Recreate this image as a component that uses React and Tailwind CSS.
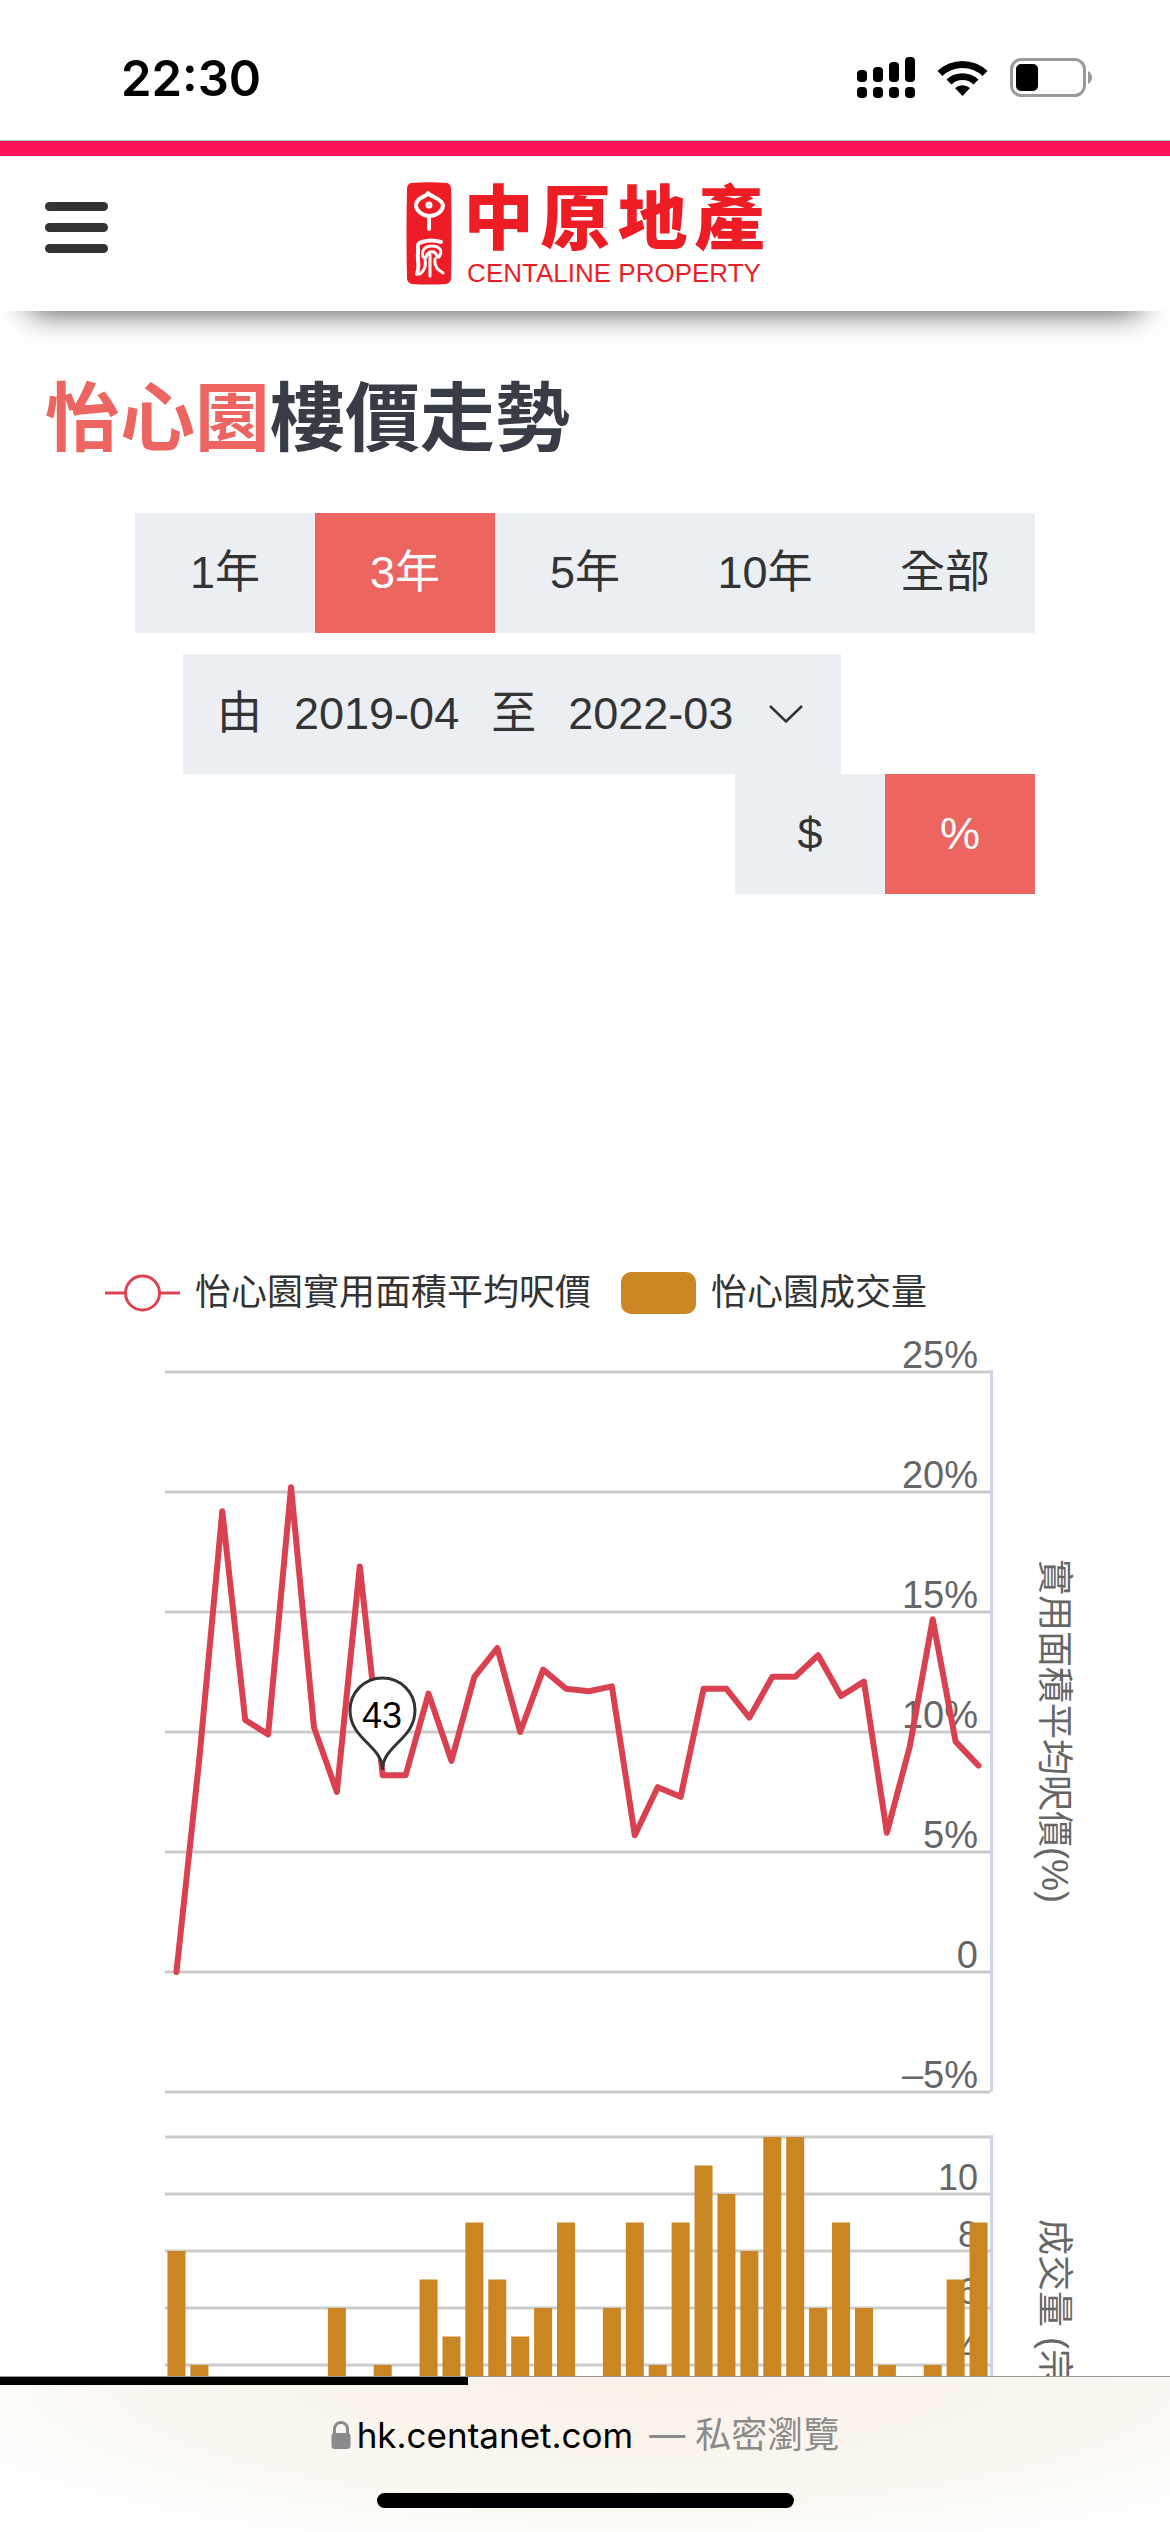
import { useState } from 'react'

const PERIODS = ['1年', '3年', '5年', '10年', '全部']
const UNITS = ['$', '%']

// price change per month, in percent
const PRICES = [
  0, 8.9, 19.2, 10.5, 9.9, 20.2, 10.2, 7.5, 16.9, 8.2, 8.2, 11.6, 8.8, 12.3, 13.5, 10, 12.6, 11.8, 11.7, 11.9, 5.7,
  7.7, 7.3, 11.8, 11.8, 10.6, 12.3, 12.3, 13.2, 11.5, 12.1, 5.8, 9.4, 14.7, 9.6, 8.6,
]
const VOLUMES = [
  8, 4, 2, 1, 3, 2, 1, 6, 3, 4, 2, 7, 5, 9, 7, 5, 6, 9, 3, 6, 9, 4, 9, 11, 10, 8, 12, 12, 6, 9, 6, 4, 2, 4, 7, 9,
]

const PLOT_LEFT = 165
const PLOT_RIGHT = 990
const STEP = (PLOT_RIGHT - PLOT_LEFT) / PRICES.length

const pointX = (i) => PLOT_LEFT + STEP * (i + 0.5)
const priceY = (v) => 642 - v * 24
const volumeY = (v) => 1149 - v * 28.5

const PRICE_TICKS = [
  [25, '25%'],
  [20, '20%'],
  [15, '15%'],
  [10, '10%'],
  [5, '5%'],
  [0, '0'],
  [-5, '–5%'],
]
const VOLUME_TICKS = [12, 10, 8, 6, 4]

function StatusBar() {
  return (
    <div className="flex h-[141px] shrink-0 items-center justify-between border-b border-[#b9c4bd] pt-4 pr-[78px] pl-[121px]">
      <span className="font-['Inter'] text-[49px] leading-none font-semibold text-black">22:30</span>
      <div className="flex items-center gap-[22px]">
        <svg className="h-[42px] w-[58px]" viewBox="0 0 58 42" aria-hidden="true">
          <rect x="0" y="13" width="10" height="12" rx="4" />
          <rect x="16" y="10" width="10" height="15" rx="4" />
          <rect x="32" y="5" width="10" height="20" rx="4" />
          <rect x="48" y="0" width="10" height="25" rx="4" />
          <rect x="0" y="30" width="10" height="11" rx="4" />
          <rect x="16" y="30" width="10" height="11" rx="4" />
          <rect x="32" y="30" width="10" height="11" rx="4" />
          <rect x="48" y="30" width="10" height="11" rx="4" />
        </svg>
        <svg className="h-[38px] w-[51px]" viewBox="0 0 51 38" aria-hidden="true">
          <path d="M0.5 12 A36 36 0 0 1 50.5 12 L45.5 17 A29 29 0 0 0 5.5 17 Z" />
          <path d="M9.5 20.5 A23.5 23.5 0 0 1 41.5 20.5 L36.5 25.5 A16 16 0 0 0 14.5 25.5 Z" />
          <path d="M18 29 A11.5 11.5 0 0 1 33 29 L25.5 37 Z" />
        </svg>
        <svg className="h-[40px] w-[82px]" viewBox="0 0 82 40" aria-hidden="true">
          <rect x="1.5" y="1.5" width="73" height="36" rx="10" fill="none" stroke="#9a9a9a" strokeWidth="3" />
          <rect x="6" y="6" width="22" height="27" rx="5" />
          <path d="M78 13 Q82 15.500 82 19.500 T78 26 Z" fill="#9a9a9a" />
        </svg>
      </div>
    </div>
  )
}

function Logo() {
  return (
    <a href="#home" aria-label="中原地產" className="flex items-center gap-3 text-[#ee1c25]">
      <svg className="h-[103px] w-[46px]" viewBox="0 0 46 103" aria-hidden="true">
        <path
          d="M5 1 Q23 -0.500 41 1 Q45 2 45 7 Q46 50 45 96 Q45 101 40 102 Q23 103 6 102 Q1 101 1 96 Q0 50 1 7 Q1 2 5 1 Z"
          fill="#ee1c25"
        />
        <g fill="none" stroke="#fff" strokeLinecap="round" strokeLinejoin="round">
          <path d="M22 11 C21 15 10 15 10 23 C10 29 17 34 23 34 C31 34 37 29 37 23 C36 16 24 15 22 11 Z" strokeWidth="4" />
          <circle cx="23" cy="23" r="2" strokeWidth="3" />
          <path d="M23 35 V47" strokeWidth="4" />
          <path d="M11 92 C14 84 11 77 12 70 C12 63 11 61 16 60 C22 58 28 58 35 60" strokeWidth="4" />
          <path
            d="M17 75 C15 67 20 64 26 64 C34 64 37 69 33 75 M20 75 C22 68 30 68 31 75 M24 73 V94 M19 77 C20 84 19 88 14 92 M29 77 C28 85 32 88 37 91"
            strokeWidth="3"
          />
        </g>
      </svg>
      <span className="flex flex-col items-center">
        <span className="flex gap-[7px] font-['Noto_Sans_CJK_TC',sans-serif] text-[70px] leading-[66px] font-black">
          <span>中</span>
          <span>原</span>
          <span>地</span>
          <span>產</span>
        </span>
        <span className="mt-3 font-['Liberation_Sans',sans-serif] text-[26px] leading-[28px] whitespace-nowrap">
          CENTALINE PROPERTY
        </span>
      </span>
    </a>
  )
}

function SiteHeader() {
  return (
    <header className="relative z-10 grid h-[170px] shrink-0 grid-cols-[1fr_auto_1fr] items-center border-t-[15px] border-[#ff1556] bg-white px-[45px] shadow-[0_30px_30px_-30px_rgba(0,0,0,0.75)]">
      <button type="button" aria-label="選單" className="flex w-[63px] flex-col gap-3 pb-3">
        <span className="h-[9px] rounded-full bg-[#333]" />
        <span className="h-[9px] rounded-full bg-[#333]" />
        <span className="h-[9px] rounded-full bg-[#333]" />
      </button>
      <Logo />
    </header>
  )
}

function SegmentedButtons({ options, selected, onSelect, buttonClass }) {
  return (
    <div className="flex">
      {options.map((option) => (
        <button
          key={option}
          type="button"
          aria-pressed={option === selected}
          onClick={() => onSelect(option)}
          className={`h-[120px] ${buttonClass} ${option === selected ? 'bg-[#ec6561] text-white' : 'bg-[#ebeff4] text-[#333]'}`}
        >
          {option}
        </button>
      ))}
    </div>
  )
}

function Legend() {
  return (
    <div className="flex items-center gap-[15px] pl-[105px] text-[36px] leading-[42px] text-[#333]">
      <svg className="h-[42px] w-[75px]" viewBox="0 0 75 42" aria-hidden="true">
        <path d="M0 21 H75" stroke="#dc4453" strokeWidth="3" />
        <circle cx="37.500" cy="21" r="17" fill="#fff" stroke="#dc4453" strokeWidth="3" />
      </svg>
      <span>怡心園實用面積平均呎價</span>
      <span className="ml-[15px] h-[42px] w-[75px] rounded-[10px] bg-[#c98622]" />
      <span>怡心園成交量</span>
    </div>
  )
}

function TrendChart() {
  return (
    <svg
      className="block w-full shrink-0 font-['Liberation_Sans','Noto_Sans_CJK_TC',sans-serif]"
      viewBox="0 0 1170 1180"
      role="img"
      aria-label="怡心園樓價走勢"
    >
      <g stroke="#ccc" strokeWidth="3">
        {PRICE_TICKS.map(([value]) => (
          <line key={value} x1={PLOT_LEFT} x2={PLOT_RIGHT} y1={priceY(value)} y2={priceY(value)} />
        ))}
        {VOLUME_TICKS.map((value) => (
          <line key={value} x1={PLOT_LEFT} x2={PLOT_RIGHT} y1={volumeY(value)} y2={volumeY(value)} />
        ))}
      </g>
      <path d="M991.500 40 V762 M991.500 805 V1149" stroke="#ccd6eb" strokeWidth="3" />

      <g fill="#666" textAnchor="end">
        {PRICE_TICKS.map(([value, label]) => (
          <text key={value} x="978" y={priceY(value) - 4} fontSize="38">
            {label}
          </text>
        ))}
        {VOLUME_TICKS.slice(1).map((value) => (
          <text key={value} x="978" y={volumeY(value) - 4} fontSize="36">
            {value}
          </text>
        ))}
      </g>
      <g fill="#666" fontSize="36">
        <text transform="translate(1042 229) rotate(90)">實用面積平均呎價(%)</text>
        <text transform="translate(1042 889) rotate(90)">成交量 (宗)</text>
      </g>

      <g fill="#c98622">
        {VOLUMES.map((value, i) => (
          <rect key={i} x={pointX(i) - 9} y={volumeY(value)} width="18" height={value * 28.5} />
        ))}
      </g>
      <polyline
        points={PRICES.map((value, i) => `${pointX(i)},${priceY(value)}`).join(' ')}
        fill="none"
        stroke="#da4150"
        strokeWidth="6"
        strokeLinejoin="round"
        strokeLinecap="round"
      />

      <path
        d="M382.500 440 C382.500 415 350 410 350 380 A32.500 32 0 0 1 415 380 C415 410 382.500 415 382.500 440 Z"
        fill="#fff"
        stroke="#333"
        strokeWidth="3"
      />
      <text x="382" y="398" fontSize="36" textAnchor="middle" fill="#000">
        43
      </text>
    </svg>
  )
}

function BrowserBar() {
  return (
    <footer className="flex h-[156px] shrink-0 flex-col items-center border-t border-[#979797] bg-[radial-gradient(ellipse_at_55%_0%,#faf1e8_0%,#faf6ef_50%,#fdfcfa_75%,#ffffff_100%)]">
      <div className="h-2 w-2/5 self-start bg-black" />
      <div className="flex items-center pt-[26px] text-[36px] leading-[48px]">
        <svg className="mr-1.5 h-[28px] w-[20px]" viewBox="0 0 20 28" aria-hidden="true">
          <path d="M3.500 13 V8 A6.500 6.500 0 0 1 16.500 8 V13" fill="none" stroke="#8a8a8e" strokeWidth="3" />
          <rect x="0.500" y="12" width="19" height="16" rx="3" fill="#8a8a8e" />
        </svg>
        <span className="font-['Inter'] text-[35px] text-black">hk.centanet.com</span>
        <span className="ml-4 font-['Inter','Noto_Sans_CJK_TC',sans-serif] text-[#8a8a8a]">— 私密瀏覽</span>
      </div>
      <div className="mt-[34px] h-[15px] w-[417px] rounded-full bg-black" />
    </footer>
  )
}

function App() {
  const [period, setPeriod] = useState('3年')
  const [unit, setUnit] = useState('%')

  return (
    <div className="flex h-screen flex-col overflow-hidden bg-white font-['Liberation_Sans','Noto_Sans_CJK_TC',sans-serif]">
      <StatusBar />
      <SiteHeader />

      <main className="flex min-h-0 flex-1 flex-col overflow-hidden">
        <h1 className="px-[45px] pt-[54px] text-[75px] leading-[108px] font-semibold text-[#373c46]">
          <span className="text-[#ec6561]">怡心園</span>樓價走勢
        </h1>

        <div className="flex flex-col px-[135px] pt-10 text-[45px] text-[#333]">
          <SegmentedButtons options={PERIODS} selected={period} onSelect={setPeriod} buttonClass="flex-1" />
          <button
            type="button"
            className="mt-[21px] ml-12 flex h-[120px] items-center gap-8 self-start bg-[#ebeff4] pr-[38px] pl-[34px] whitespace-nowrap"
          >
            <span>由</span>
            <span>2019-04</span>
            <span>至</span>
            <span>2022-03</span>
            <svg className="ml-1 h-[18px] w-[34px]" viewBox="0 0 34 18" aria-hidden="true">
              <path d="M1 1 L17 16.500 L33 1" fill="none" stroke="#333" strokeWidth="2.500" />
            </svg>
          </button>
          <div className="self-end">
            <SegmentedButtons options={UNITS} selected={unit} onSelect={setUnit} buttonClass="w-[150px]" />
          </div>
        </div>

        <section className="flex flex-col pt-[378px]">
          <Legend />
          <div className="pt-4">
            <TrendChart />
          </div>
        </section>
      </main>

      <BrowserBar />
    </div>
  )
}

export default App
